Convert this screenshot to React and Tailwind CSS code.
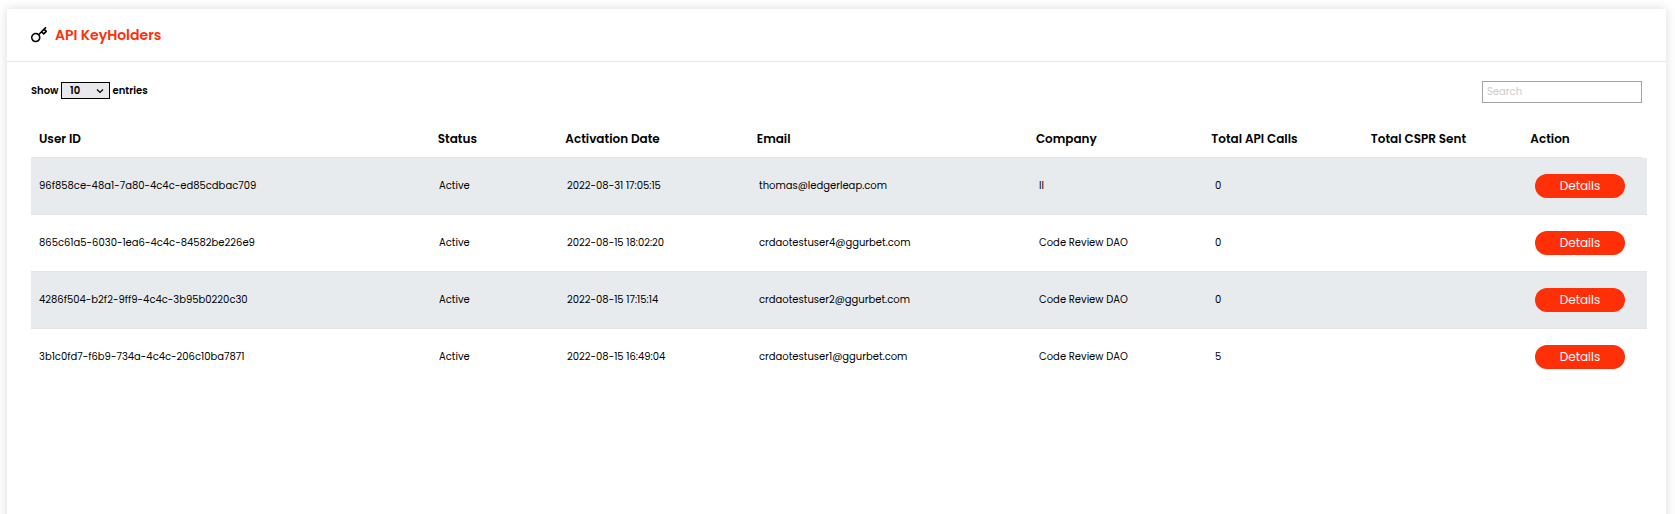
const rows = [
  { id: '96f858ce-48a1-7a80-4c4c-ed85cdbac709', date: '2022-08-31 17:05:15', email: 'thomas@ledgerleap.com', company: 'll', calls: '0' },
  { id: '865c61a5-6030-1ea6-4c4c-84582be226e9', date: '2022-08-15 18:02:20', email: 'crdaotestuser4@ggurbet.com', company: 'Code Review DAO', calls: '0' },
  { id: '4286f504-b2f2-9ff9-4c4c-3b95b0220c30', date: '2022-08-15 17:15:14', email: 'crdaotestuser2@ggurbet.com', company: 'Code Review DAO', calls: '0' },
  { id: '3b1c0fd7-f6b9-734a-4c4c-206c10ba7871', date: '2022-08-15 16:49:04', email: 'crdaotestuser1@ggurbet.com', company: 'Code Review DAO', calls: '5' },
];
const columns = ['User ID', 'Status', 'Activation Date', 'Email', 'Company', 'Total API Calls', 'Total CSPR Sent', 'Action'];

function KeyIcon() {
  return (
    <svg className="size-4" viewBox="1 1 22 22" fill="none" stroke="currentColor" strokeWidth="2.2" strokeLinecap="round" strokeLinejoin="round">
      <path d="M21 2l-2 2m-7.61 7.61a5.5 5.5 0 1 1-7.778 7.778 5.5 5.5 0 0 1 7.777-7.777zm0 0L15.5 7.5m0 0l3 3L22 7l-3-3m-3.5 3.5L19 4" />
    </svg>
  );
}

function Cell({ children }) {
  return <div className="pb-0.5 pl-2">{children}</div>;
}

export default function App() {
  return (
    <div className="h-[514px] overflow-hidden bg-white pt-[9px] pr-[9px] pl-[7px] font-['Poppins','Inter',sans-serif] text-black">
      <main className="h-[600px] bg-white shadow-[0_0_10px_rgba(0,0,0,0.15)]">
        <header className="flex h-[53px] items-center gap-2 border-b border-[#e5e5e5] px-6 pb-px">
          <KeyIcon />
          <h1 className="text-sm font-semibold text-[#ff2f07]">API KeyHolders</h1>
        </header>
        <div className="flex h-[60px] justify-between px-6 pt-[19px]">
          <div className="flex h-[19px] items-center gap-[2.5px] text-[10px] font-semibold">
            <span>Show</span>
            <button className="flex h-[17px] w-[49px] items-center justify-between border border-black bg-[#e9e9ed] pr-[5px] pl-2">
              <span>10</span>
              <svg className="size-2" viewBox="0 0 8 8" fill="none" stroke="currentColor" strokeWidth="1.2">
                <path d="M1 2.5l3 3 3-3" />
              </svg>
            </button>
            <span>entries</span>
          </div>
          <input placeholder="Search" className="h-[22px] w-40 border border-[#a3a3a3] px-1 text-[10px] placeholder:text-[#cccccc]" />
        </div>
        <div className="pr-[19px] pl-6">
          <div className="mr-[5px] grid h-[36px] grid-cols-[25fr_8fr_12fr_17.5fr_11fr_10fr_10fr_7.5fr] items-center border-b border-[#e5e5e5] text-xs font-semibold">
            {columns.map((c) => <Cell key={c}>{c}</Cell>)}
          </div>
          {rows.map((r) => (
            <div key={r.id} className="grid h-[57px] grid-cols-[25fr_8fr_12fr_17.5fr_11fr_10fr_10fr_7.5fr] items-center border-b border-[#e5e5e5] text-[10px] even:bg-[#e8ebee] last:border-transparent">
              <Cell>{r.id}</Cell>
              <Cell>Active</Cell>
              <Cell>{r.date}</Cell>
              <Cell>{r.email}</Cell>
              <Cell>{r.company}</Cell>
              <Cell>{r.calls}</Cell>
              <Cell />
              <div className="pl-2">
                <button className="block h-6 w-[90px] rounded-full bg-[#ff2f07] text-xs text-white">Details</button>
              </div>
            </div>
          ))}
        </div>
      </main>
    </div>
  );
}
